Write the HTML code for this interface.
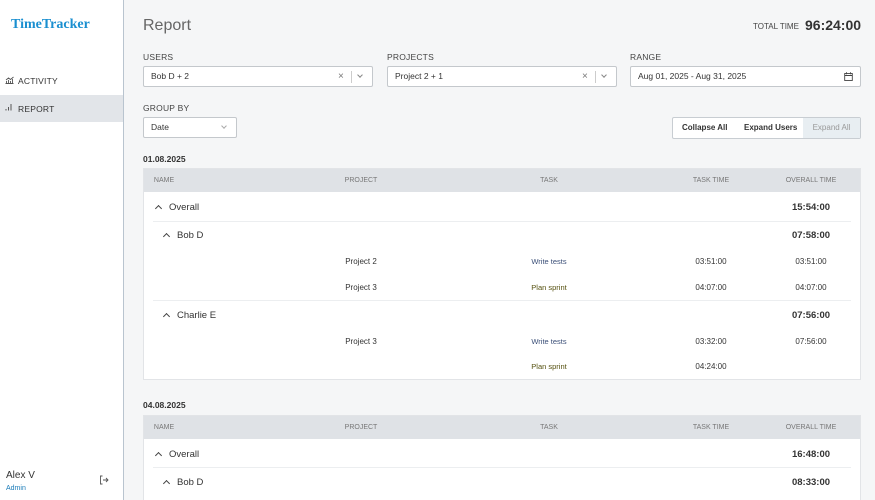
<!DOCTYPE html>
<html><head><meta charset="utf-8"><style>
*{box-sizing:border-box;margin:0;padding:0}
html,body{width:875px;height:500px;overflow:hidden}
body{background:#f5f6f7;font-family:"Liberation Sans",sans-serif;color:#333;position:relative}
.a{position:absolute;white-space:nowrap}
.side{position:absolute;left:0;top:0;width:124px;height:500px;background:#fff;border-right:1px solid #b9c4cf}
.lbl{font-size:8.5px;color:#444;letter-spacing:.2px}
.inp{position:absolute;background:#fff;border:1px solid #c4c8cc;border-radius:2px;height:21px;font-size:8.5px;line-height:19px;padding-left:7px;color:#333}
.tbl{position:absolute;left:143px;width:718px;background:#fff;border:1px solid #e2e4e7}
.hd{position:absolute;left:0;right:0;height:23px;background:#dfe2e6}
.hd span{position:absolute;top:8px;font-size:7px;color:#777;transform:translateX(-50%);white-space:nowrap}
.c{transform:translateX(-50%);font-size:8px}
.t{font-size:7.5px}
.sep{position:absolute;left:9px;right:9px;height:1px;background:#eceef0}
.b{font-weight:bold;font-size:9.5px;color:#333}
.n{font-size:9.5px;color:#333}
.chev{display:inline-block;width:5px;height:5px;border-left:1.2px solid #444;border-top:1.2px solid #444;transform:rotate(45deg);margin-right:8px;position:relative;top:1px}
</style></head><body>
<div class="side">
<div class="a" style="left:11px;top:17px;font-family:'Liberation Serif',serif;font-weight:bold;font-size:14px;color:#1a8fd0">TimeTracker</div>
<svg class="a" style="left:5px;top:76px" width="9" height="8" viewBox="0 0 9 8"><path d="M0.5 7.5h8M1.5 7V5M3.5 7V4M5.5 7V5M7.5 7V3M1 4l2.5-2 2 1.5 3-2.5" stroke="#555" fill="none" stroke-width="0.9"/></svg>
<div class="a lbl" style="left:18px;top:76px;color:#333">ACTIVITY</div>
<div class="a" style="left:0;top:95px;width:123px;height:27px;background:#e2e5e9"></div>
<svg class="a" style="left:5px;top:103px" width="8" height="8" viewBox="0 0 8 8"><path d="M1 7.5V6M3.5 7.5V4M6 7.5V1" stroke="#555" stroke-width="1"/></svg>
<div class="a lbl" style="left:18px;top:104px;color:#333">REPORT</div>
<div class="a" style="left:6px;top:470px;font-size:10px;color:#333">Alex V</div>
<div class="a" style="left:6px;top:485px;font-size:7px;color:#1a7bb8">Admin</div>
<svg class="a" style="left:99px;top:475px" width="10" height="10" viewBox="0 0 10 10"><path d="M3.5 1H1.5V9H3.5M4 5H9M7 3l2 2-2 2" stroke="#555" fill="none" stroke-width="0.9"/></svg>
</div>

<div class="a" style="left:143px;top:17px;font-size:16px;color:#666">Report</div>
<div class="a" style="left:753px;top:22px;font-size:8px;color:#444">TOTAL TIME</div>
<div class="a" style="left:805px;top:17px;font-size:14px;font-weight:bold;color:#333">96:24:00</div>

<div class="a lbl" style="left:143px;top:52px">USERS</div>
<div class="inp" style="left:143px;top:66px;width:230px">Bob D + 2<span class="a" style="left:194px;top:0;color:#777;font-size:10px">×</span><span class="a" style="left:207px;top:4px;width:1px;height:12px;background:#ccc"></span><span class="a" style="left:214px;top:6px;width:4px;height:4px;border-right:1px solid #888;border-bottom:1px solid #888;transform:rotate(45deg)"></span></div>
<div class="a lbl" style="left:387px;top:52px">PROJECTS</div>
<div class="inp" style="left:387px;top:66px;width:230px">Project 2 + 1<span class="a" style="left:194px;top:0;color:#777;font-size:10px">×</span><span class="a" style="left:207px;top:4px;width:1px;height:12px;background:#ccc"></span><span class="a" style="left:214px;top:6px;width:4px;height:4px;border-right:1px solid #888;border-bottom:1px solid #888;transform:rotate(45deg)"></span></div>
<div class="a lbl" style="left:630px;top:52px">RANGE</div>
<div class="inp" style="left:630px;top:66px;width:231px">Aug 01, 2025 - Aug 31, 2025
<svg class="a" style="left:213px;top:5px" width="9" height="9" viewBox="0 0 9 9"><rect x="0.7" y="1.5" width="7.6" height="7" fill="none" stroke="#444" stroke-width="0.9"/><path d="M0.7 3.5h7.6M2.5 0.3v2M6.5 0.3v2" stroke="#444" stroke-width="0.9"/></svg></div>

<div class="a lbl" style="left:143px;top:103px">GROUP BY</div>
<div class="inp" style="left:143px;top:117px;width:94px">Date<span class="a" style="left:78px;top:6px;width:4px;height:4px;border-right:1px solid #aaa;border-bottom:1px solid #aaa;transform:rotate(45deg)"></span></div>

<div class="a" style="left:672px;top:117px;width:189px;height:22px;background:#fff;border:1px solid #c8cdd2;border-radius:2px;font-size:8px;font-weight:bold;line-height:20px">
<span class="a" style="left:9px">Collapse All</span><span class="a" style="left:71px">Expand Users</span>
<span class="a" style="left:130px;top:0;width:57px;height:20px;background:#e8eef2;color:#999;font-weight:normal;text-align:center">Expand All</span></div>

<div class="a" style="left:143px;top:154px;font-size:8.5px;font-weight:bold">01.08.2025</div>
<div class="tbl" style="top:168px;height:212px">
<div class="hd" style="top:0"><span style="left:20px">NAME</span><span style="left:217px">PROJECT</span><span style="left:405px">TASK</span><span style="left:567px">TASK TIME</span><span style="left:667px">OVERALL TIME</span></div>
<div class="a n" style="left:12px;top:33px"><i class="chev"></i>Overall</div><div class="a b c" style="left:667px;top:33px">15:54:00</div>
<div class="sep" style="top:52px"></div>
<div class="a n" style="left:20px;top:61px"><i class="chev"></i>Bob D</div><div class="a b c" style="left:667px;top:61px">07:58:00</div>
<div class="a c" style="left:217px;top:88px">Project 2</div><div class="a c t" style="left:405px;top:88px;color:#3b4f78">Write tests</div><div class="a c" style="left:567px;top:88px">03:51:00</div><div class="a c" style="left:667px;top:88px">03:51:00</div>
<div class="a c" style="left:217px;top:114px">Project 3</div><div class="a c t" style="left:405px;top:114px;color:#55500f">Plan sprint</div><div class="a c" style="left:567px;top:114px">04:07:00</div><div class="a c" style="left:667px;top:114px">04:07:00</div>
<div class="sep" style="top:131px"></div>
<div class="a n" style="left:20px;top:141px"><i class="chev"></i>Charlie E</div><div class="a b c" style="left:667px;top:141px">07:56:00</div>
<div class="a c" style="left:217px;top:168px">Project 3</div><div class="a c t" style="left:405px;top:168px;color:#3b4f78">Write tests</div><div class="a c" style="left:567px;top:168px">03:32:00</div><div class="a c" style="left:667px;top:168px">07:56:00</div>
<div class="a c t" style="left:405px;top:193px;color:#55500f">Plan sprint</div><div class="a c" style="left:567px;top:193px">04:24:00</div>
</div>

<div class="a" style="left:143px;top:400px;font-size:8.5px;font-weight:bold">04.08.2025</div>
<div class="tbl" style="top:415px;height:85px;border-bottom:none">
<div class="hd" style="top:0"><span style="left:20px">NAME</span><span style="left:217px">PROJECT</span><span style="left:405px">TASK</span><span style="left:567px">TASK TIME</span><span style="left:667px">OVERALL TIME</span></div>
<div class="a n" style="left:12px;top:33px"><i class="chev"></i>Overall</div><div class="a b c" style="left:667px;top:33px">16:48:00</div>
<div class="sep" style="top:51px"></div>
<div class="a n" style="left:20px;top:61px"><i class="chev"></i>Bob D</div><div class="a b c" style="left:667px;top:61px">08:33:00</div>
</div>
</body></html>
